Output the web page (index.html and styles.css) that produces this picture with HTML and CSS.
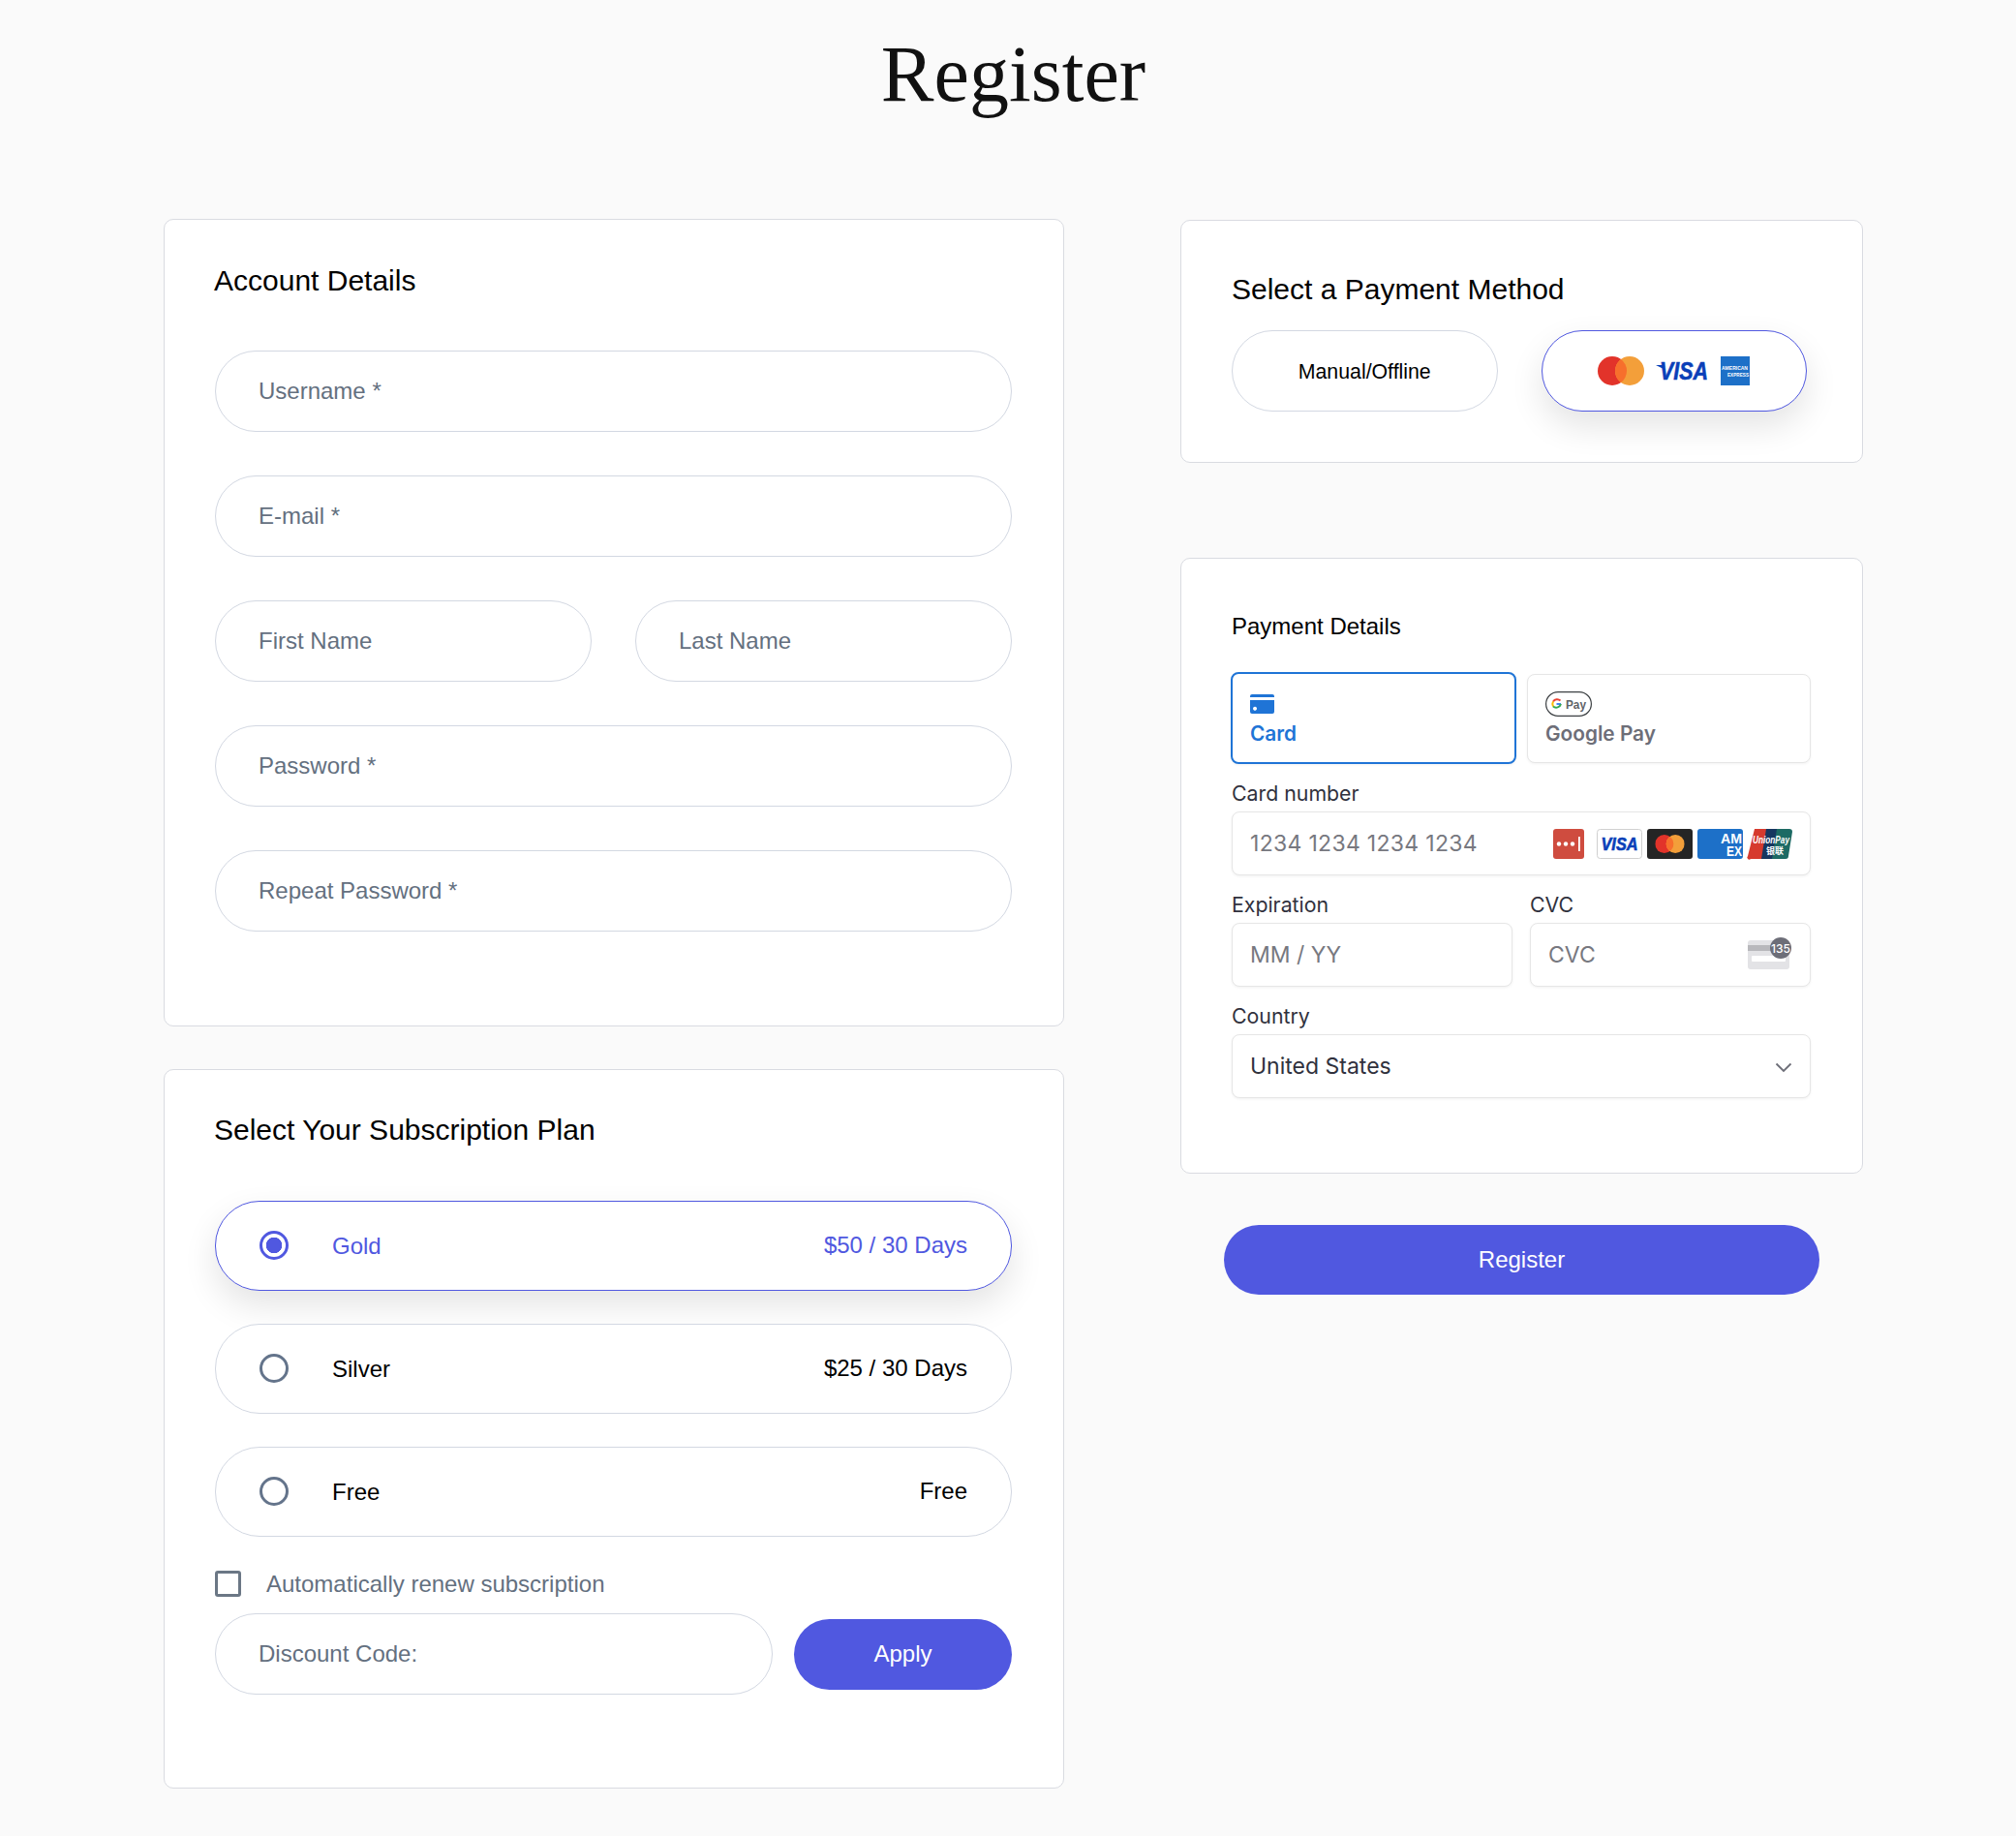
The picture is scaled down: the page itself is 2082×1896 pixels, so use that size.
FILE: index.html
```html
<!DOCTYPE html>
<html lang="en">
<head>
<meta charset="utf-8">
<title>Register</title>
<link rel="stylesheet" href="styles.css">
</head>
<body>
<svg class="defs" width="0" height="0" aria-hidden="true">
  <symbol id="mc" viewBox="0 0 48 30">
    <circle cx="15" cy="15" r="15" fill="#e2332a"/>
    <circle cx="33" cy="15" r="15" fill="#f39f3a"/>
    <path d="M24 3a15 15 0 0 1 0 24a15 15 0 0 1 0-24z" fill="#f76f2c"/>
  </symbol>
</svg>
<main class="page">
  <h1 class="title">Register</h1>
  <div class="columns">
    <div class="col-left">
      <section class="card account">
        <h2 class="card-title">Account Details</h2>
        <div class="fields">
          <input class="pill-input" placeholder="Username *">
          <input class="pill-input" placeholder="E-mail *">
          <div class="name-row">
            <input class="pill-input" placeholder="First Name">
            <input class="pill-input" placeholder="Last Name">
          </div>
          <input class="pill-input" placeholder="Password *">
          <input class="pill-input" placeholder="Repeat Password *">
        </div>
      </section>
      <section class="card plans">
        <h2 class="card-title">Select Your Subscription Plan</h2>
        <div class="plan-list">
          <div class="plan plan-active"><span class="radio radio-on"></span><span class="plan-name">Gold</span><span class="plan-price">$50 / 30 Days</span></div>
          <div class="plan"><span class="radio"></span><span class="plan-name">Silver</span><span class="plan-price">$25 / 30 Days</span></div>
          <div class="plan"><span class="radio"></span><span class="plan-name">Free</span><span class="plan-price">Free</span></div>
        </div>
        <label class="renew"><span class="checkbox"></span><span>Automatically renew subscription</span></label>
        <div class="discount">
          <input class="pill-input" placeholder="Discount Code:">
          <button class="btn-apply" type="button">Apply</button>
        </div>
      </section>
    </div>
    <div class="col-right">
      <section class="card method">
        <h2 class="card-title">Select a Payment Method</h2>
        <div class="method-row">
          <div class="method-btn">Manual/Offline</div>
          <div class="method-btn method-active">
            <svg class="i-mc" width="48" height="30"><use href="#mc"/></svg>
            <svg class="i-visa" width="56" height="30" viewBox="0 0 56 30"><path d="M0 9h7l3 5z" fill="#0a3fb8"/><text class="visa-text" x="29" y="24" font-size="26" textLength="50" lengthAdjust="spacingAndGlyphs">VISA</text></svg>
            <svg class="i-amex" width="30" height="30" viewBox="0 0 30 30"><rect width="30" height="30" fill="#1d70c8"/><text class="amex-text" x="1" y="14" font-size="6" textLength="27" lengthAdjust="spacingAndGlyphs">AMERICAN</text><text class="amex-text" x="7" y="21" font-size="6" textLength="22" lengthAdjust="spacingAndGlyphs">EXPRESS</text></svg>
          </div>
        </div>
      </section>
      <section class="card details">
        <h2 class="details-title">Payment Details</h2>
        <div class="tabs">
          <div class="tab tab-active">
            <svg width="25" height="20" viewBox="0 0 25 20"><path d="M2 0h21a2 2 0 0 1 2 2v1H0V2a2 2 0 0 1 2-2z" fill="#1f74d6"/><path fill-rule="evenodd" d="M0 6h25v12a2 2 0 0 1-2 2H2a2 2 0 0 1-2-2zM6 13a2 2 0 1 0 0 3.500a2 2 0 0 0 0-3.500z" fill="#1f74d6"/></svg>
            <span>Card</span>
          </div>
          <div class="tab">
            <svg width="48" height="26" viewBox="0 0 48 26"><rect x=".6" y=".6" width="46.800" height="24.800" rx="12.400" fill="#fff" stroke="#3c4043" stroke-width="1.200"/><path d="M16 13h-4.500" stroke="#4285f4" stroke-width="2" fill="none"/><path d="M15.500 9.500a5 5 0 0 0-7.500 1" stroke="#ea4335" stroke-width="2" fill="none"/><path d="M8 10.500a5 5 0 0 0 0 5" stroke="#fbbc04" stroke-width="2" fill="none"/><path d="M8 15.500a5 5 0 0 0 8-2.500" stroke="#34a853" stroke-width="2" fill="none"/><text class="gpay-text" x="21" y="18" font-size="12.500" textLength="21" lengthAdjust="spacingAndGlyphs">Pay</text></svg>
            <span>Google Pay</span>
          </div>
        </div>
        <div class="field-label">Card number</div>
        <div class="box">
          <span class="box-ph box-digits">1234 1234 1234 1234</span>
          <span class="brands">
            <svg class="i-lp" width="32" height="31" viewBox="0 0 32 31"><rect width="32" height="31" rx="3" fill="#cf4c3f"/><circle cx="6" cy="15.500" r="2.200" fill="#fff"/><circle cx="13" cy="15.500" r="2.200" fill="#fff"/><circle cx="20" cy="15.500" r="2.200" fill="#fff"/><rect x="26" y="8" width="1.800" height="15" fill="#fff"/></svg>
            <svg width="47" height="31" viewBox="0 0 47 31"><rect x=".5" y=".5" width="46" height="30" rx="3" fill="#fff" stroke="#d0d0d0"/><text class="visa-text" x="23.500" y="22" font-size="18" textLength="38" lengthAdjust="spacingAndGlyphs">VISA</text></svg>
            <svg width="47" height="31" viewBox="0 0 47 31"><rect width="47" height="31" rx="3" fill="#252525"/><svg x="8" y="6" width="31" height="19" viewBox="0 0 48 30"><use href="#mc"/></svg></svg>
            <svg width="47" height="31" viewBox="0 0 47 31"><rect width="47" height="31" rx="3" fill="#1d70c8"/><text class="amex-big" x="24" y="15" font-size="15" textLength="22" lengthAdjust="spacingAndGlyphs">AM</text><text class="amex-big" x="30" y="28" font-size="15" textLength="16" lengthAdjust="spacingAndGlyphs">EX</text></svg>
            <svg width="46" height="31" viewBox="0 0 46 31"><path d="M7 0h16l-5 31H3a2 2 0 0 1-3-3z" fill="#d63a2e"/><path d="M19 0h16l-5 31H14z" fill="#16365f"/><path d="M30 0h13a3 3 0 0 1 3 3l-4 25a3 3 0 0 1-3 3H25z" fill="#1d6a64"/><text class="up-text" x="5" y="15" font-size="10.500" textLength="38" lengthAdjust="spacingAndGlyphs">UnionPay</text><text class="up-cn" x="19" y="26" font-size="9">银联</text></svg>
          </span>
        </div>
        <div class="split">
          <div class="split-cell">
            <div class="field-label">Expiration</div>
            <div class="box"><span class="box-ph">MM / YY</span></div>
          </div>
          <div class="split-cell">
            <div class="field-label">CVC</div>
            <div class="box">
              <span class="box-ph">CVC</span>
              <svg class="i-cvc" width="45" height="33" viewBox="0 0 45 33"><rect y="3" width="43" height="30" rx="3" fill="#e3e3e6"/><rect y="8" width="43" height="6" fill="#b8b8bc"/><rect x="4" y="19" width="35" height="6" rx="1" fill="#fff"/><circle cx="34" cy="11" r="11" fill="#6d6e78"/><text class="cvc-text" x="34" y="15.500" font-size="12">135</text></svg>
            </div>
          </div>
        </div>
        <div class="field-label">Country</div>
        <div class="box box-select">
          <span class="box-value">United States</span>
          <svg class="i-chev" width="18" height="11" viewBox="0 0 18 11"><path d="M1.500 1.500L9 9l7.500-7.500" fill="none" stroke="#6d6e78" stroke-width="1.800"/></svg>
        </div>
      </section>
      <button class="btn-register" type="button">Register</button>
    </div>
  </div>
</main>
</body>
</html>
```
FILE: styles.css
```css
* { box-sizing: border-box; }
html, body { margin: 0; padding: 0; }
body {
  background: #fafafa;
  font-family: "Liberation Sans", Arial, sans-serif;
  color: #000;
  height: 1896px;
  overflow: hidden;
}
svg { overflow: visible; }
.defs { position: absolute; }
.page { margin-left: 169px; width: 1755px; }
.title {
  margin: 0;
  height: 226px;
  padding-top: 27px;
  text-align: center;
  font: 400 82px/100px "Liberation Serif", Georgia, serif;
  color: #111;
}
.columns { display: flex; gap: 120px; align-items: flex-start; }
.col-left { width: 930px; display: flex; flex-direction: column; gap: 44px; }
.col-right { width: 705px; margin-top: 1px; display: flex; flex-direction: column; }

.card {
  background: #fff;
  border: 1px solid #d9dbe1;
  border-radius: 10px;
  padding-left: 52px;
  padding-right: 53px;
}
.card-title { margin: 0; font: 400 30px/36px "Liberation Sans", Arial, sans-serif; color: #000; }
.col-left .card-title { margin-left: -1px; }

.account { height: 834px; padding-top: 45px; }
.fields { margin-top: 54px; display: flex; flex-direction: column; gap: 45px; }
.name-row { display: flex; gap: 45px; }
.name-row .pill-input { flex: 1; min-width: 0; }
.pill-input {
  display: block;
  width: 100%;
  height: 84px;
  padding: 0 44px;
  border: 1px solid #d3d8e2;
  border-radius: 42px;
  background: #fff;
  font: 400 24px "Liberation Sans", Arial, sans-serif;
  outline: none;
}
.pill-input::placeholder { color: #64707f; opacity: 1; }

.plans { height: 743px; padding-top: 44px; }
.plan-list { margin-top: 55px; display: flex; flex-direction: column; gap: 34px; }
.plan {
  height: 93px;
  padding: 0 45px;
  display: flex;
  align-items: center;
  border: 1px solid #d3d8e2;
  border-radius: 46px;
  background: #fff;
  font-size: 24px;
  color: #000;
}
.plan-active {
  border-color: #5058e0;
  color: #5058e0;
  box-shadow: 0 15px 35px rgba(0, 0, 0, 0.11);
}
.radio {
  width: 30px;
  height: 30px;
  margin-bottom: 2px;
  border-radius: 50%;
  border: 3px solid #64748b;
  flex: none;
}
.radio-on {
  border-color: #5058e0;
  background: radial-gradient(circle, #5058e0 0 8px, #fff 8.500px);
}
.plan-name { margin-left: 45px; flex: 1; }
.plan-price { margin-bottom: 2px; }
.renew {
  margin-top: 35px;
  height: 27px;
  display: flex;
  align-items: center;
  gap: 26px;
  font-size: 24px;
  color: #64707f;
}
.checkbox {
  width: 27px;
  height: 27px;
  border: 3.500px solid #6b7785;
  border-radius: 3px;
  flex: none;
}
.discount { margin-top: 17px; display: flex; align-items: center; gap: 22px; }
.discount .pill-input { width: 576px; flex: none; }
.btn-apply {
  flex: 1;
  height: 73px;
  border: 0;
  border-radius: 37px;
  background: #5058e0;
  color: #fff;
  font: 400 24px "Liberation Sans", Arial, sans-serif;
}

.method { height: 251px; padding-top: 53px; }
.method-row { margin-top: 24px; padding-right: 4px; display: flex; gap: 45px; }
.method-btn {
  flex: 1;
  height: 84px;
  padding-top: 3px;
  display: flex;
  align-items: center;
  justify-content: center;
  border: 1px solid #d3d8e2;
  border-radius: 42px;
  background: #fff;
  font-size: 21.300px;
  color: #000;
}
.method-active {
  border-color: #5058e0;
  box-shadow: 0 15px 35px rgba(0, 0, 0, 0.11);
}
.i-mc { margin-top: -3px; }
.i-visa { margin-left: 12px; margin-top: -3px; }
.i-amex { margin-left: 11px; margin-top: -3px; }
.visa-text { font-family: "Liberation Sans", Arial, sans-serif; font-weight: 700; font-style: italic; fill: #0a3fb8; stroke: #0a3fb8; stroke-width: 0.600; text-anchor: middle; }
.amex-text { font-family: "Liberation Sans", Arial, sans-serif; font-weight: 700; fill: #fff; }
.amex-big { font-family: "Liberation Sans", Arial, sans-serif; font-weight: 700; fill: #fff; }
.up-text { font-family: "Liberation Sans", Arial, sans-serif; font-weight: 700; font-style: italic; fill: #fff; }
.up-cn { font-family: "Noto Sans CJK SC", sans-serif; font-weight: 700; fill: #fff; }
.gpay-text { font-family: "Liberation Sans", Arial, sans-serif; fill: #5f6368; }
.cvc-text { font-family: "Inter", sans-serif; font-weight: 500; fill: #fff; text-anchor: middle; }

.details {
  margin-top: 98px;
  height: 636px;
  padding-top: 55px;
  font-family: "Inter", sans-serif;
}
.details-title { margin: 0; font: 400 24px/30px "Liberation Sans", Arial, sans-serif; color: #000; }
.tabs { margin-top: 32px; display: flex; gap: 11px; align-items: center; }
.tab {
  flex: 1;
  height: 92px;
  padding: 17px 18px 0;
  border: 1px solid #e6e6e6;
  border-radius: 8px;
  background: #fff;
  box-shadow: 0 1px 3px rgba(0, 0, 0, 0.05);
  display: flex;
  flex-direction: column;
  gap: 5px;
  font-size: 20.800px;
  line-height: 26px;
  font-weight: 600;
  color: #6d6e78;
}
.tab svg { display: block; }
.tab-active {
  height: 95px;
  padding: 21px 18px 0;
  gap: 8px;
  border: 2px solid #1f74d6;
  color: #1f74d6;
  margin-left: -1px;
}
.field-label {
  margin-top: 12px;
  font-size: 21.300px;
  line-height: 37px;
  color: #30313d;
}
.box {
  height: 66px;
  padding: 0 18px;
  border: 1px solid #e6e6e6;
  border-radius: 8px;
  background: #fff;
  box-shadow: 0 1px 3px rgba(0, 0, 0, 0.06);
  display: flex;
  align-items: center;
  justify-content: space-between;
  font-size: 23px;
}
.box-ph { color: #77787f; }
.box-digits { letter-spacing: 0.300px; }
.box-value { color: #30313d; }
.i-chev { margin-top: 2px; }
.brands { display: flex; align-items: center; gap: 5px; }
.brands svg { display: block; flex: none; }
.i-lp { margin-right: 8px; }
.i-cvc { margin-right: 1px; margin-top: -4px; }
.split { display: flex; gap: 18px; }
.split-cell { flex: 1; min-width: 0; }

.btn-register {
  margin: 53px 45px 0;
  height: 72px;
  border: 0;
  border-radius: 36px;
  background: #5058e0;
  color: #fff;
  font: 400 24px "Liberation Sans", Arial, sans-serif;
}
```
